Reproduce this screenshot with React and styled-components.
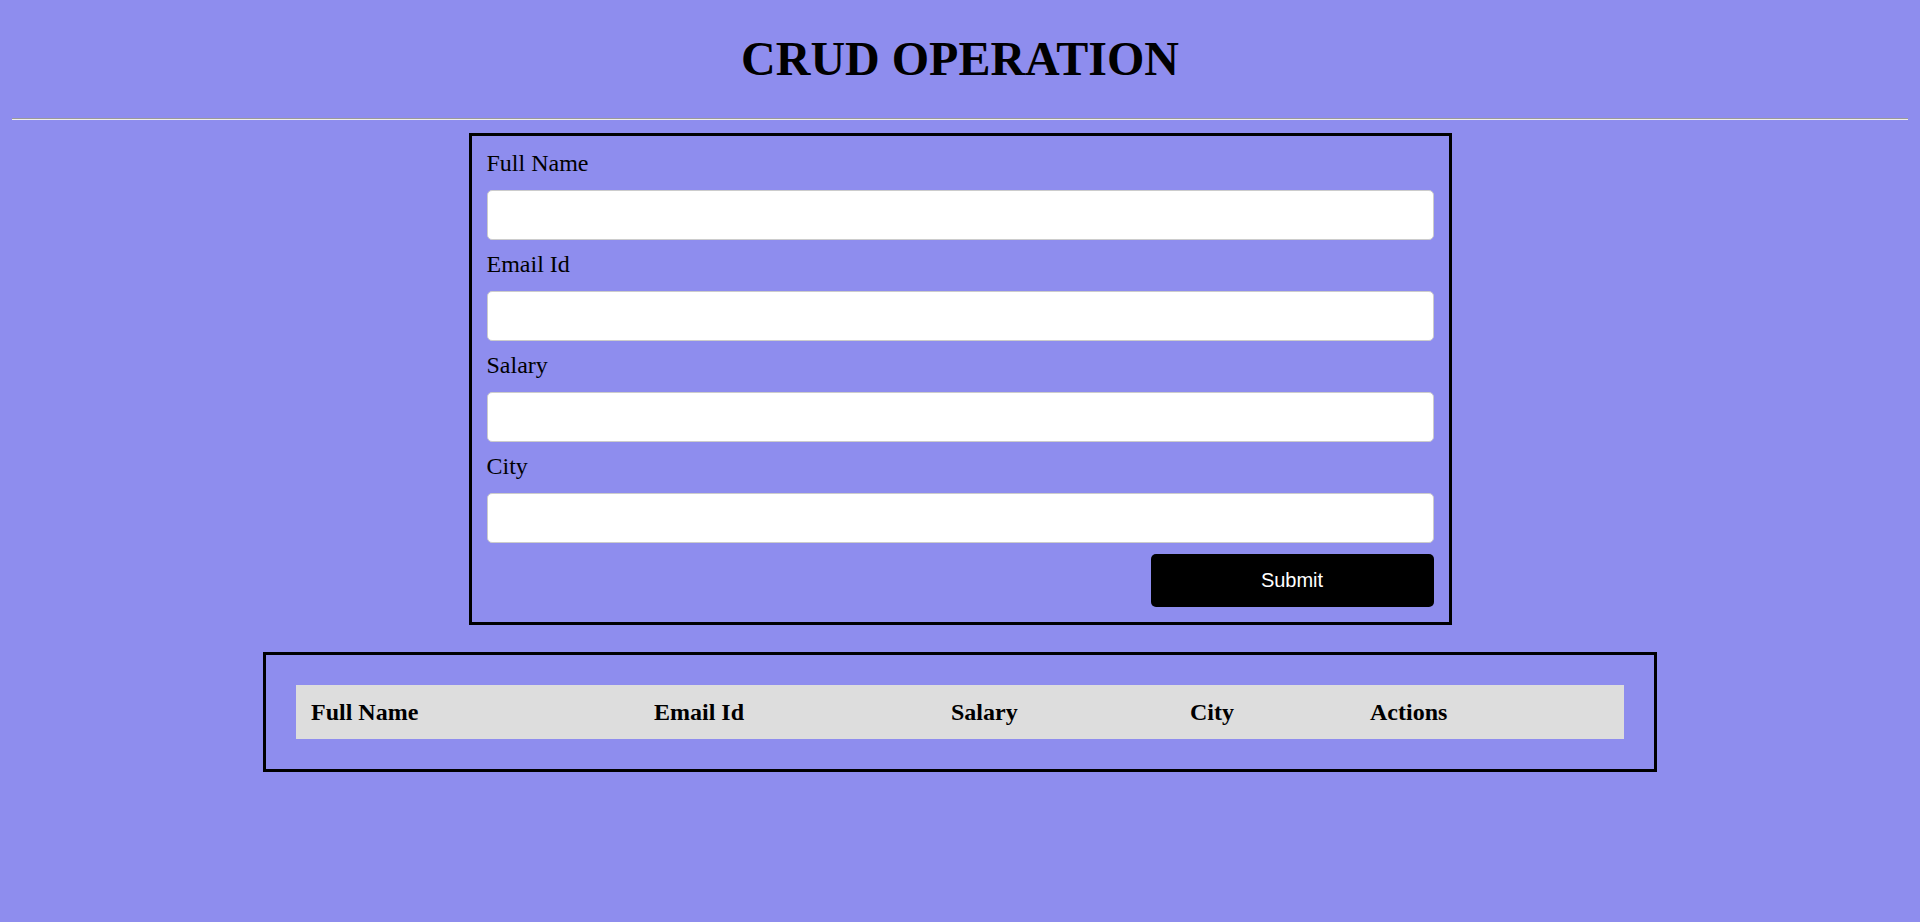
import React from "react"
import styled, { createGlobalStyle } from "styled-components"

const GlobalStyle = createGlobalStyle`
  body {
    margin: 8px;
    background: #8e8dee;
    font-family: "Liberation Serif", "Times New Roman", serif;
    color: #000;
  }
`

const Title = styled.h1`
  margin: 24px 0 33px;
  text-align: center;
  font-size: 48px;
  line-height: 53px;
  font-weight: bold;
`

const Divider = styled.hr`
  margin: 0 4px;
  height: 0;
  border: none;
  border-top: 1px solid #9a9a9a;
  border-bottom: 1px solid #eeeeee;
`

const FormBox = styled.form`
  box-sizing: border-box;
  width: 983px;
  margin: 13px auto 0;
  padding: 14px 15px 15px;
  border: 3px solid #000;
`

const Label = styled.label`
  display: block;
  font-size: 24px;
  line-height: 27px;
  margin-bottom: 13px;
`

const Input = styled.input`
  display: block;
  box-sizing: border-box;
  width: 100%;
  height: 50px;
  margin: 0 0 11px;
  padding: 0 12px;
  border: 1px solid #cccccc;
  border-radius: 5px;
  background: #fff;
  font-size: 20px;
`

const ButtonRow = styled.div`
  display: flex;
  justify-content: flex-end;
  margin-top: 1px;
`

const SubmitButton = styled.button`
  width: 283px;
  height: 53px;
  border: none;
  border-radius: 5px;
  background: #000;
  color: #fff;
  font-family: "Liberation Sans", Arial, sans-serif;
  font-size: 20px;
  cursor: pointer;
`

const TableBox = styled.div`
  box-sizing: border-box;
  width: 1394px;
  margin: 27px auto 0;
  padding: 30px;
  border: 3px solid #000;
`

const Table = styled.table`
  width: 100%;
  border-collapse: collapse;
  table-layout: fixed;
`

const HeadRow = styled.tr`
  background: #dddddd;
`

const HeadCell = styled.th`
  box-sizing: border-box;
  width: ${(p) => p.$w}px;
  height: 54px;
  padding: 0 15px;
  text-align: left;
  vertical-align: middle;
  font-size: 24px;
  font-weight: bold;
`

const fields = [
  { id: "fullName", label: "Full Name" },
  { id: "email", label: "Email Id" },
  { id: "salary", label: "Salary" },
  { id: "city", label: "City" },
]

const columns = [
  { title: "Full Name", w: 343 },
  { title: "Email Id", w: 297 },
  { title: "Salary", w: 239 },
  { title: "City", w: 180 },
  { title: "Actions", w: 269 },
]

export default function App() {
  return (
    <>
      <GlobalStyle />
      <Title>CRUD OPERATION</Title>
      <Divider />
      <FormBox onSubmit={(e) => e.preventDefault()}>
        {fields.map((f) => (
          <div key={f.id}>
            <Label htmlFor={f.id}>{f.label}</Label>
            <Input id={f.id} type="text" />
          </div>
        ))}
        <ButtonRow>
          <SubmitButton type="submit">Submit</SubmitButton>
        </ButtonRow>
      </FormBox>
      <TableBox>
        <Table>
          <thead>
            <HeadRow>
              {columns.map((c) => (
                <HeadCell key={c.title} $w={c.w}>
                  {c.title}
                </HeadCell>
              ))}
            </HeadRow>
          </thead>
          <tbody></tbody>
        </Table>
      </TableBox>
    </>
  )
}
